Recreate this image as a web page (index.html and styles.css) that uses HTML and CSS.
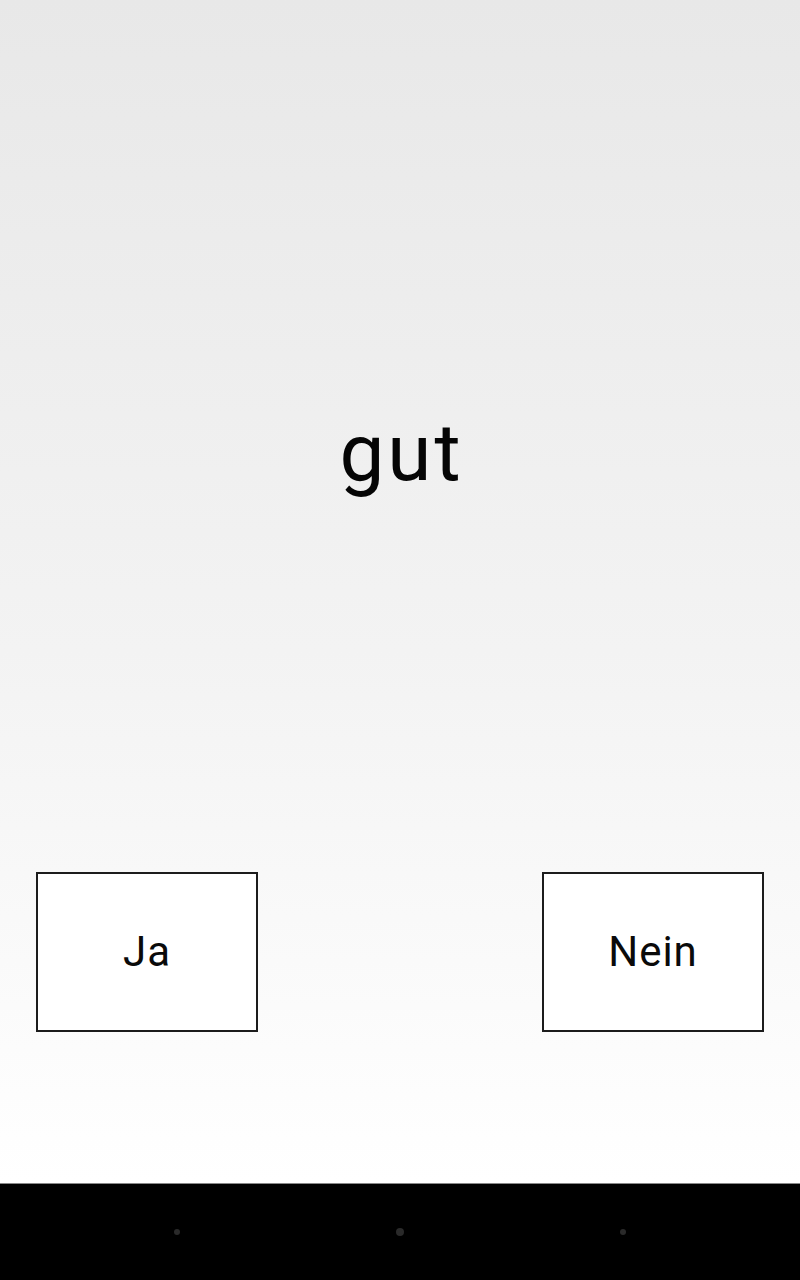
FILE: index.html
```html
<!DOCTYPE html>
<html lang="de">
<head>
<meta charset="utf-8">
<title>gut</title>
<link rel="stylesheet" href="styles.css">
</head>
<body>
<main class="screen">
  <div class="word-area">
    <div class="word">gut</div>
  </div>
  <div class="answers">
    <button class="answer">Ja</button>
    <button class="answer">Nein</button>
  </div>
</main>
<nav class="navbar">
  <span class="dot"></span>
  <span class="dot dot-mid"></span>
  <span class="dot"></span>
</nav>
</body>
</html>
```
FILE: styles.css
```css
html, body {
  margin: 0;
  padding: 0;
}
body {
  width: 800px;
  height: 1280px;
  display: flex;
  flex-direction: column;
  font-family: Roboto, "Noto Sans", sans-serif;
  color: #000;
  overflow: hidden;
}
.screen {
  height: 1183px;
  display: flex;
  flex-direction: column;
  background: linear-gradient(to bottom, #e8e8e8 0%, #f3f3f3 55%, #ffffff 100%);
  border-bottom: 1px solid #888;
}
.word-area {
  height: 872px;
  display: flex;
  justify-content: center;
  padding-top: 403px;
  box-sizing: border-box;
}
.word {
  font-size: 80px;
  line-height: 100px;
  height: 100px;
  letter-spacing: 3px;
  margin-right: -3px;
  color: #050505;
}
.answers {
  display: flex;
  justify-content: space-between;
  padding: 0 36px;
}
.answer {
  width: 222px;
  height: 160px;
  box-sizing: border-box;
  border: 2px solid #1c1c1c;
  background: #fff;
  font-family: Roboto, "Noto Sans", sans-serif;
  font-size: 42px;
  letter-spacing: 1px;
  color: #0a0a0a;
  padding: 0;
  margin: 0;
  line-height: 1;
}
.navbar {
  flex: 1;
  background: #000;
  display: flex;
  justify-content: center;
  align-items: center;
  gap: 216px;
}
.dot {
  width: 6px;
  height: 6px;
  border-radius: 50%;
  background: #2a2a2a;
}
.dot-mid {
  width: 8px;
  height: 8px;
}
```
